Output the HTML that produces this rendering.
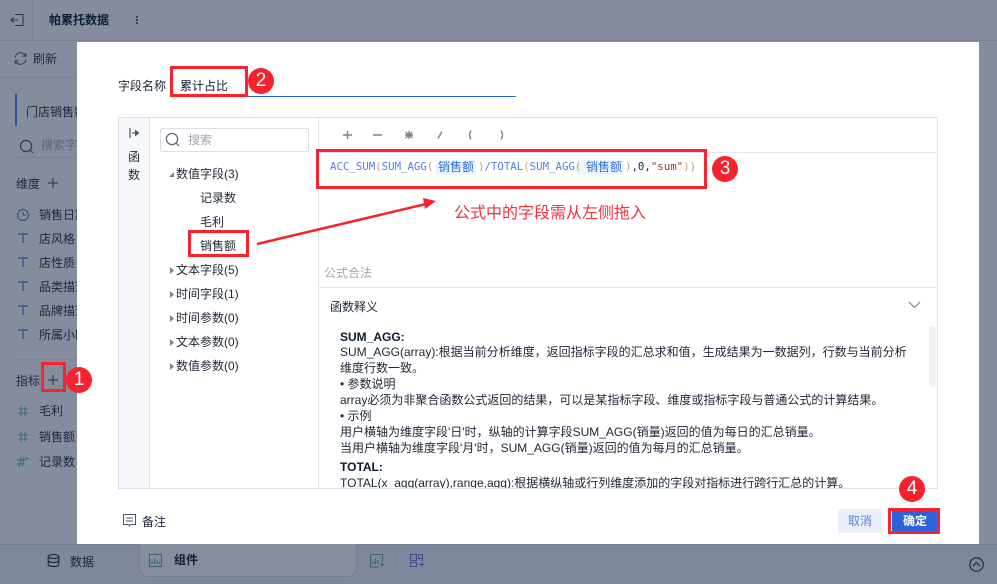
<!DOCTYPE html>
<html lang="zh">
<head>
<meta charset="utf-8">
<style>
html,body{margin:0;padding:0;width:997px;height:584px;overflow:hidden;background:#858c9e}
body{position:relative;font-family:"Liberation Sans","Noto Sans CJK SC",sans-serif;font-size:12px;color:#0d1a30}
.a{position:absolute;white-space:nowrap;line-height:16px}
.box{position:absolute;box-sizing:border-box}
.red{position:absolute;box-sizing:border-box;border:3px solid #fb2230}
.num{position:absolute;width:26px;height:26px;border-radius:50%;background:#f6232f;color:#fff;font-size:19px;line-height:26px;text-align:center}
.dark{color:#0e1c38}
.mono{font-family:"DejaVu Sans Mono","Liberation Mono",monospace;font-size:10.72px;line-height:16px;color:#4f80e2}
.mono span.p{color:#c4a36f}
svg{position:absolute;overflow:visible}
</style>
</head>
<body>
<!-- Background app -->
<div class="box" style="left:0;top:0;width:997px;height:41px;border-bottom:1px solid #797f90"></div>
<div class="box" style="left:32px;top:0;width:1px;height:41px;background:#7c8394"></div>
<svg style="left:10px;top:13px" width="14" height="14" viewBox="0 0 14 14" fill="none" stroke="#1e3552" stroke-width="1.1"><path d="M5 1.500h8v11H5M1 7h7M3.500 4.500L1 7l2.500 2.500"/></svg>
<div class="a dark" style="left:49px;top:12px;font-weight:bold">帕累托数据</div>
<div class="box" style="left:136px;top:16px;width:2px;height:2px;background:#333f55;box-shadow:0 3px 0 #333f55,0 6px 0 #333f55"></div>
<div class="box" style="left:0;top:77px;width:77px;height:1px;background:#7c8394"></div>
<svg style="left:13px;top:51px" width="15" height="15" viewBox="0 0 15 15" fill="none" stroke="#333f55" stroke-width="1.1"><path d="M2 6.500A5.500 5.500 0 0 1 12.500 5M13 8.500A5.500 5.500 0 0 1 2.500 10M12.800 2v3.200H9.600M2.200 13v-3.200h3.200"/></svg>
<div class="a" style="left:33px;top:51px;color:#202d45">刷新</div>
<div class="box" style="left:15px;top:94px;width:2px;height:32px;background:#2c4fa8"></div>
<div class="a" style="left:26px;top:104px;width:51px;overflow:hidden;color:#1b2740">门店销售数据</div>
<svg style="left:19px;top:139px" width="15" height="15" viewBox="0 0 15 15" fill="none" stroke="#2e3b52" stroke-width="1.2"><circle cx="7" cy="7" r="5.600"/><path d="M11 11l3 3"/></svg>
<div class="a" style="left:41px;top:137px;width:36px;overflow:hidden;color:#5f6779">搜索字段</div>
<div class="box" style="left:14px;top:157px;width:63px;height:1px;background:#7c8394"></div>
<div class="a" style="left:16px;top:176px;color:#1b2740">维度</div>
<svg style="left:47px;top:176px" width="12" height="14" viewBox="0 0 12 14" fill="none" stroke="#363f4f" stroke-width="1.2"><path d="M6 2v10M1 7h10"/></svg>
<svg style="left:17px;top:208px" width="12" height="14" viewBox="0 0 12 14" fill="none" stroke="#2d4a80" stroke-width="1"><circle cx="6" cy="7" r="5.500"/><path d="M6 3.500V7h3"/></svg>
<div class="a" style="left:39px;top:207px;width:38px;overflow:hidden;color:#1b2740">销售日期</div>
<svg style="left:17px;top:232px" width="12" height="12" viewBox="0 0 12 12" fill="none" stroke="#2d4a80" stroke-width="1.2"><path d="M1 2h10M6 2v9"/></svg>
<div class="a" style="left:39px;top:231px;width:38px;overflow:hidden;color:#1b2740">店风格</div>
<svg style="left:17px;top:256px" width="12" height="12" viewBox="0 0 12 12" fill="none" stroke="#2d4a80" stroke-width="1.2"><path d="M1 2h10M6 2v9"/></svg>
<div class="a" style="left:39px;top:255px;width:38px;overflow:hidden;color:#1b2740">店性质</div>
<svg style="left:17px;top:280px" width="12" height="12" viewBox="0 0 12 12" fill="none" stroke="#2d4a80" stroke-width="1.2"><path d="M1 2h10M6 2v9"/></svg>
<div class="a" style="left:39px;top:279px;width:38px;overflow:hidden;color:#1b2740">品类描述</div>
<svg style="left:17px;top:304px" width="12" height="12" viewBox="0 0 12 12" fill="none" stroke="#2d4a80" stroke-width="1.2"><path d="M1 2h10M6 2v9"/></svg>
<div class="a" style="left:39px;top:303px;width:38px;overflow:hidden;color:#1b2740">品牌描述</div>
<svg style="left:17px;top:328px" width="12" height="12" viewBox="0 0 12 12" fill="none" stroke="#2d4a80" stroke-width="1.2"><path d="M1 2h10M6 2v9"/></svg>
<div class="a" style="left:39px;top:327px;width:38px;overflow:hidden;color:#1b2740">所属小区</div>
<div class="box" style="left:16px;top:359px;width:61px;height:1px;background:#7c8394"></div>
<div class="a" style="left:16px;top:373px;color:#1b2740">指标</div>
<svg style="left:48px;top:375px" width="10" height="10" viewBox="0 0 10 10" fill="none" stroke="#353e4d" stroke-width="1.300"><path d="M5 0v10M0 5h10"/></svg>
<div class="a" style="left:39px;top:403px;color:#1b2740">毛利</div>
<div class="a" style="left:39px;top:429px;color:#1b2740">销售额</div>
<div class="a" style="left:39px;top:454px;color:#1b2740">记录数</div>
<svg style="left:17px;top:405px" width="12" height="12" viewBox="0 0 12 12" fill="none" stroke="#3f6b7c" stroke-width="1.100"><path d="M4 1v10M8 1v10M1 4h10M1 8h10"/></svg>
<svg style="left:17px;top:431px" width="12" height="12" viewBox="0 0 12 12" fill="none" stroke="#3f6b7c" stroke-width="1.100"><path d="M4 1v10M8 1v10M1 4h10M1 8h10"/></svg>
<svg style="left:16px;top:456px" width="14" height="12" viewBox="0 0 14 12" fill="none" stroke="#3f6b7c" stroke-width="1.100"><path d="M5 1L3 11M8 1L6 11M1 4h9M1 8h8M11 1v3M9.600 2.500h3"/></svg>
<!-- Bottom bar -->
<div class="box" style="left:0;top:544px;width:997px;height:40px;background:#7e879b;border-top:1px solid #727b90"></div>
<div class="box" style="left:139px;top:544px;width:218px;height:33px;background:#868d9f;border:1px solid #727b90;border-top:0;border-radius:0 0 9px 9px"></div>
<svg style="left:47px;top:554px" width="13" height="13" viewBox="0 0 13 13" fill="none" stroke="#12233f" stroke-width="1.100"><ellipse cx="6.500" cy="2.500" rx="5.300" ry="2"/><path d="M1.200 2.500v8c0 1.200 2.300 2 5.300 2s5.300-.8 5.300-2v-8M1.200 6.500c0 1.200 2.300 2 5.300 2s5.300-.8 5.300-2"/></svg>
<div class="a" style="left:70px;top:554px;color:#172640">数据</div>
<svg style="left:149px;top:554px" width="13" height="13" viewBox="0 0 13 13" fill="none" stroke="#3f5f74" stroke-width="1.100"><rect x=".5" y=".5" width="12" height="12"/><path d="M3 10V7M5.500 10V4.500M8 10V6M10.500 10V8"/></svg>
<div class="a" style="left:174px;top:552px;font-weight:bold;color:#101d36">组件</div>
<svg style="left:370px;top:554px" width="14" height="14" viewBox="0 0 14 14" fill="none" stroke="#3f5f74" stroke-width="1.100"><path d="M8 13H.5V.5h12V8M3 10V7M5.500 10V4.500M8 10V6M10 10.500h4M12 8.500v4"/></svg>
<div class="box" style="left:396px;top:555px;width:1px;height:12px;background:#727b90"></div>
<svg style="left:410px;top:554px" width="14" height="14" viewBox="0 0 14 14" fill="none" stroke="#454a85" stroke-width="1.100"><path d="M.5.500h6v6h-6zM8.500.500h4v4h-4zM8.500 4.500h4v3M.5 8.500h6v4h-6zM9 10.500h5M11.500 8.500v4"/></svg>
<svg style="left:969px;top:557px" width="15" height="15" viewBox="0 0 15 15" fill="none" stroke="#16243f" stroke-width="1.100"><circle cx="7.500" cy="7.500" r="6.700"/><path d="M4 9l3.500-3.500L11 9"/></svg>

<!-- Modal -->
<div class="box" style="left:77px;top:42px;width:902px;height:502px;background:#fff"></div>
<div class="a" style="left:118px;top:78px;color:#1d2535">字段名称</div>
<div class="box" style="left:171px;top:96px;width:345px;height:1px;background:#2c64d8"></div>
<div class="a" style="left:180px;top:78px;color:#0d1a30">累计占比</div>

<!-- Panel -->
<div class="box" style="left:118px;top:117px;width:820px;height:372px;border:1px solid #dcdfe8"></div>
<div class="box" style="left:119px;top:118px;width:31px;height:370px;background:#f6f8fc;border-right:1px solid #dcdfe8"></div>
<svg style="left:129px;top:127px" width="11" height="12" viewBox="0 0 11 12"><path d="M1 1v10" stroke="#4b586c" stroke-width="1.200"/><path d="M3 6h3" stroke="#4b586c" stroke-width="1.200"/><path d="M6 2.500L10.500 6 6 9.500z" fill="#4b586c"/></svg>
<div class="a" style="left:128px;top:149px;color:#1d2535">函</div>
<div class="a" style="left:128px;top:167px;color:#1d2535">数</div>
<div class="box" style="left:160px;top:128px;width:149px;height:24px;border:1px solid #dcdfe8;border-radius:2px"></div>
<svg style="left:165px;top:132px" width="15" height="15" viewBox="0 0 15 15" fill="none" stroke="#5a6475" stroke-width="1.200"><circle cx="7" cy="7" r="5.600"/><path d="M11 11l3 3"/></svg>
<div class="a" style="left:188px;top:132px;color:#a0a5b0">搜索</div>
<svg style="left:169px;top:172px" width="5" height="5" viewBox="0 0 5 5"><path d="M5 0v5H0z" fill="#7a8290"/></svg>
<div class="a" style="left:176px;top:166px;color:#1d2535">数值字段(3)</div>
<div class="a" style="left:200px;top:190px;color:#1d2535">记录数</div>
<div class="a" style="left:200px;top:214px;color:#1d2535">毛利</div>
<div class="a" style="left:200px;top:238px;color:#1d2535">销售额</div>
<svg style="left:170px;top:267px" width="4" height="7" viewBox="0 0 4 7"><path d="M0 0l4 3.500-4 3.500z" fill="#7a8290"/></svg>
<div class="a" style="left:176px;top:262px;color:#1d2535">文本字段(5)</div>
<svg style="left:170px;top:291px" width="4" height="7" viewBox="0 0 4 7"><path d="M0 0l4 3.500-4 3.500z" fill="#7a8290"/></svg>
<div class="a" style="left:176px;top:286px;color:#1d2535">时间字段(1)</div>
<svg style="left:170px;top:315px" width="4" height="7" viewBox="0 0 4 7"><path d="M0 0l4 3.500-4 3.500z" fill="#7a8290"/></svg>
<div class="a" style="left:176px;top:310px;color:#1d2535">时间参数(0)</div>
<svg style="left:170px;top:339px" width="4" height="7" viewBox="0 0 4 7"><path d="M0 0l4 3.500-4 3.500z" fill="#7a8290"/></svg>
<div class="a" style="left:176px;top:334px;color:#1d2535">文本参数(0)</div>
<svg style="left:170px;top:363px" width="4" height="7" viewBox="0 0 4 7"><path d="M0 0l4 3.500-4 3.500z" fill="#7a8290"/></svg>
<div class="a" style="left:176px;top:358px;color:#1d2535">数值参数(0)</div>
<div class="box" style="left:318px;top:118px;width:1px;height:370px;background:#e4e6ec"></div>

<!-- Toolbar -->
<svg style="left:342px;top:129px" width="170" height="12" viewBox="0 0 170 12" fill="none" stroke="#7a828e" stroke-width="1.400"><path d="M1 6h9M5.500 2v8M31 6h9M63 6h8M67 2v8M63.500 3l7 6M70.500 3l-7 6M96 9.500l4-7M129 1.500c-2 3-2 6 0 9M159 1.500c2 3 2 6 0 9"/></svg>
<div class="box" style="left:319px;top:152px;width:619px;height:1px;background:#e6e8f0"></div>

<!-- Formula -->
<div class="box" style="left:436px;top:160px;width:40px;height:15px;background:#eef5fc;border-radius:2px"></div>
<div class="box" style="left:576px;top:160px;width:48px;height:15px;background:#eef5fc;border-radius:2px"></div>
<div class="a mono" style="left:330px;top:159px">ACC_SUM<span class="p">(</span>SUM_AGG<span class="p">(</span></div>
<div class="a" style="left:438px;top:159px;color:#2c6ed8">销售额</div>
<div class="a mono" style="left:478px;top:159px"><span class="p">)</span>/TOTAL<span class="p">(</span>SUM_AGG<span class="p">(</span></div>
<div class="a" style="left:586px;top:159px;color:#2c6ed8">销售额</div>
<div class="a mono" style="left:625px;top:159px;color:#1d2535"><span class="p">)</span>,0,<span style="color:#8c3a2c">"sum"</span><span class="p">))</span></div>

<!-- Annotation -->
<div class="a" style="left:454px;top:204px;color:#f6303c;font-size:16px;line-height:20px">公式中的字段需从左侧拖入</div>

<!-- Status -->
<div class="a" style="left:324px;top:265px;color:#a0a5b0">公式合法</div>
<div class="box" style="left:319px;top:287px;width:619px;height:1px;background:#e4e6ec"></div>
<div class="a" style="left:330px;top:299px;color:#1d2535">函数释义</div>
<svg style="left:908px;top:301px" width="13" height="8" viewBox="0 0 13 8" fill="none" stroke="#6b7a94" stroke-width="1.100"><path d="M1 1l5.500 5.500L12 1"/></svg>
<div class="box" style="left:929px;top:326px;width:7px;height:61px;background:#eff1f5;border-radius:3px"></div>

<!-- Docs -->
<div class="box" style="left:319px;top:320px;width:608px;height:168px;overflow:hidden">
<div class="a" style="left:21px;top:9px;font-weight:bold;color:#0d1a30">SUM_AGG:</div>
<div class="a" style="left:21px;top:24px;color:#1d2535">SUM_AGG(array):根据当前分析维度，返回指标字段的汇总求和值，生成结果为一数据列，行数与当前分析</div>
<div class="a" style="left:21px;top:40px;color:#1d2535">维度行数一致。</div>
<div class="a" style="left:21px;top:56px;color:#1d2535">• 参数说明</div>
<div class="a" style="left:21px;top:72px;color:#1d2535">array必须为非聚合函数公式返回的结果，可以是某指标字段、维度或指标字段与普通公式的计算结果。</div>
<div class="a" style="left:21px;top:88px;color:#1d2535">• 示例</div>
<div class="a" style="left:21px;top:104px;color:#1d2535">用户横轴为维度字段'日'时，纵轴的计算字段SUM_AGG(销量)返回的值为每日的汇总销量。</div>
<div class="a" style="left:21px;top:120px;color:#1d2535">当用户横轴为维度字段'月'时，SUM_AGG(销量)返回的值为每月的汇总销量。</div>
<div class="a" style="left:21px;top:139px;font-weight:bold;color:#0d1a30">TOTAL:</div>
<div class="a" style="left:21px;top:155px;color:#1d2535">TOTAL(x_agg(array),range,agg):根据横纵轴或行列维度添加的字段对指标进行跨行汇总的计算。</div>
</div>

<!-- Footer -->
<svg style="left:123px;top:514px" width="13" height="13" viewBox="0 0 13 13" fill="none" stroke="#4a5568" stroke-width="1"><path d="M.5.500h12v10H7.500L6.500 12l-1-1.500h-5zM3 4h7M3 7h7"/></svg>
<div class="a" style="left:142px;top:514px;color:#1d2535">备注</div>
<div class="box" style="left:838px;top:509px;width:44px;height:24px;background:#e9eef9;border-radius:2px;color:#5b7fd6;text-align:center;line-height:24px">取消</div>
<div class="box" style="left:892px;top:509px;width:46px;height:24px;background:#2b63dc;color:#fff;text-align:center;line-height:24px;font-weight:bold">确定</div>
<div class="box" style="left:891px;top:511px;width:1px;height:20px;background:#fff"></div>

<!-- Red annotations -->
<div class="red" style="left:41px;top:362px;width:25px;height:30px"></div>
<div class="num" style="left:66px;top:367px">1</div>
<div class="red" style="left:170px;top:66px;width:78px;height:31px"></div>
<div class="num" style="left:248px;top:68px">2</div>
<div class="red" style="left:316px;top:149px;width:391px;height:40px"></div>
<div class="num" style="left:712px;top:156px">3</div>
<div class="red" style="left:188px;top:230px;width:61px;height:27px"></div>
<div class="num" style="left:899px;top:476px">4</div>
<div class="red" style="left:888px;top:508px;width:52px;height:26px"></div>
<svg style="left:0;top:0" width="997" height="584" viewBox="0 0 997 584"><path d="M257 244L426 204" stroke="#f6232f" stroke-width="2.500" fill="none"/><path d="M436 201L423 198L425 209z" fill="#f6232f"/></svg>
</body>
</html>
